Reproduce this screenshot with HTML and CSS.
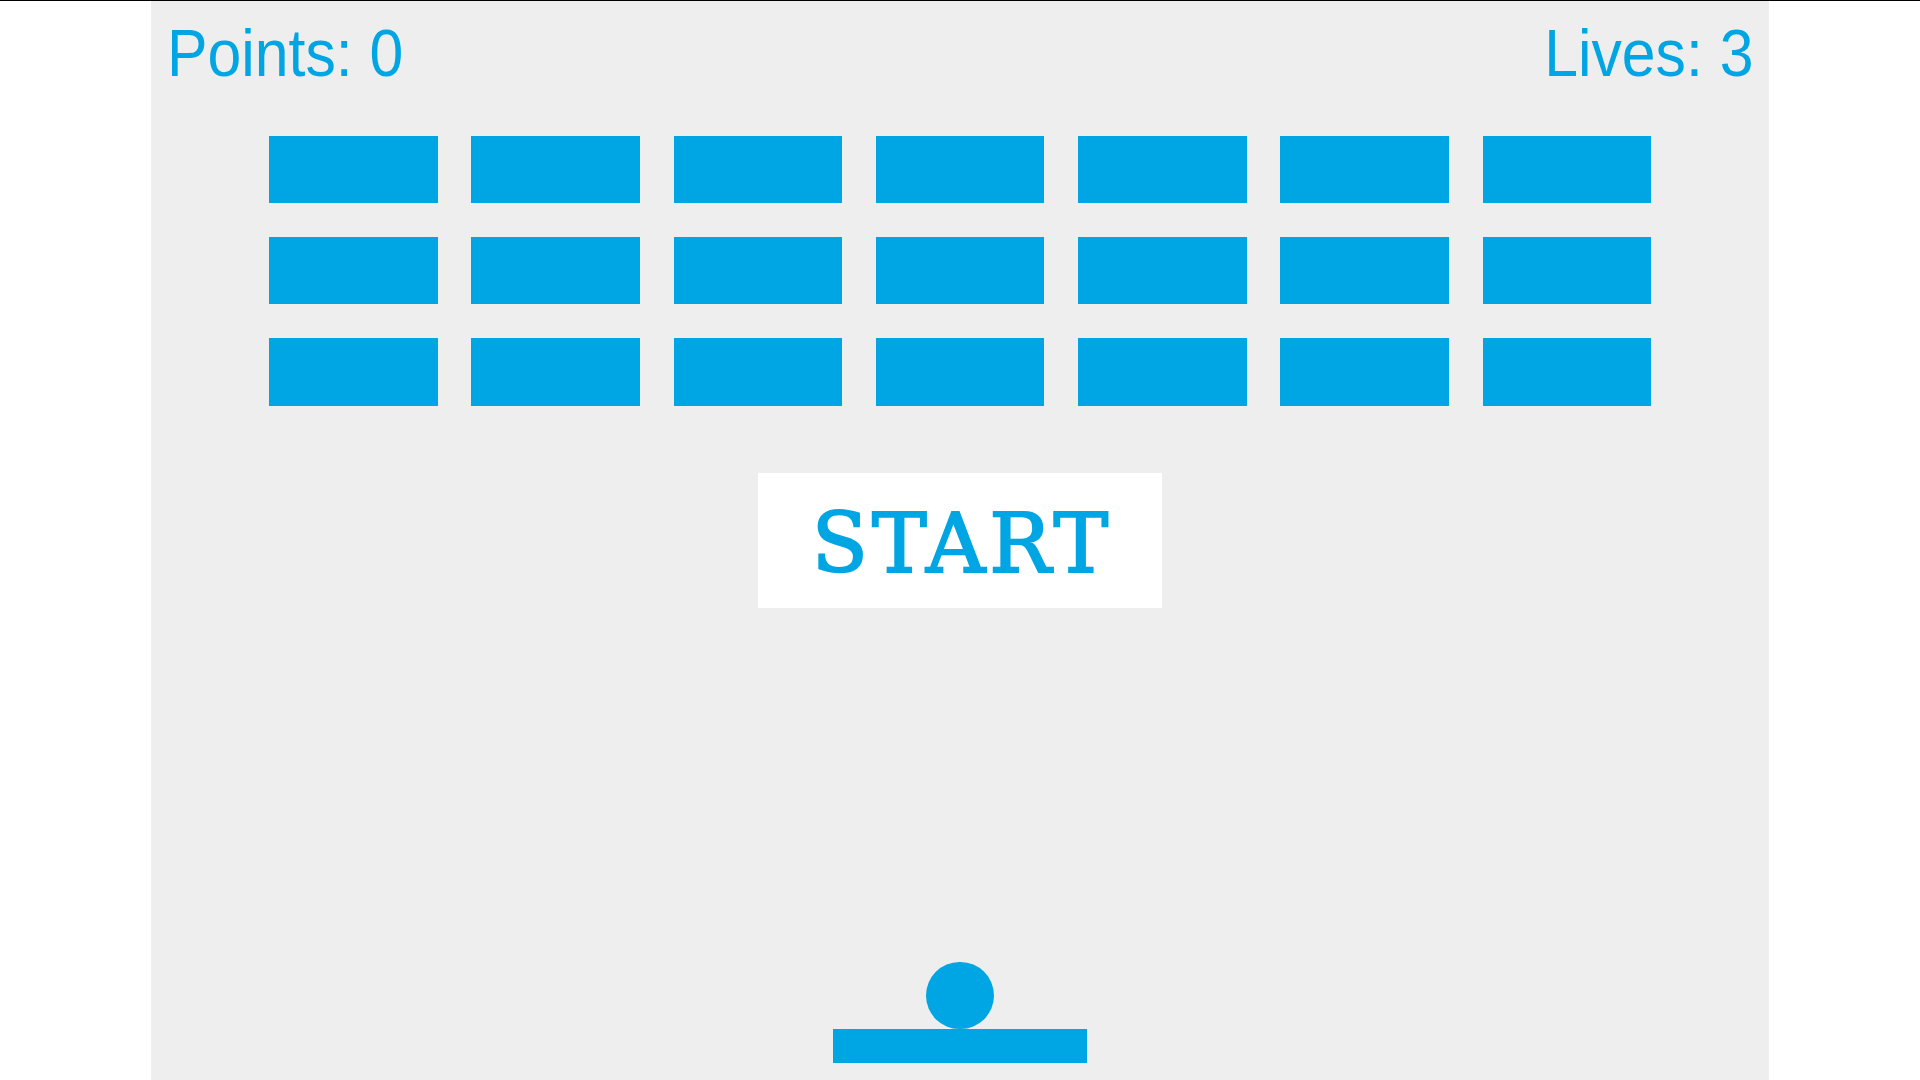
FILE: index.html
```html
<!DOCTYPE html>
<html lang="en">
<head>
  <meta charset="UTF-8" />
  <meta name="viewport" content="width=device-width, initial-scale=1" />
  <title>Breakout</title>
  <link rel="stylesheet" href="styles.css">
</head>
<body>

  <div class="game">
    <div class="hud">
      <span class="points">Points: 0</span>
      <span class="lives">Lives: 3</span>
    </div>

    <div class="bricks">
      <div class="brick"></div><div class="brick"></div><div class="brick"></div><div class="brick"></div><div class="brick"></div><div class="brick"></div><div class="brick"></div>
      <div class="brick"></div><div class="brick"></div><div class="brick"></div><div class="brick"></div><div class="brick"></div><div class="brick"></div><div class="brick"></div>
      <div class="brick"></div><div class="brick"></div><div class="brick"></div><div class="brick"></div><div class="brick"></div><div class="brick"></div><div class="brick"></div>
    </div>

    <button class="start-btn">START</button>

    <div class="spacer"></div>

    <div class="ball"></div>
    <div class="paddle"></div>
  </div>

</body>
</html>
```

FILE: styles.css
```css
body {
  margin: 0;
  background: #fff;
  border-top: 1px solid #000;
}

.game {
  width: 1618px;
  height: 1079px;
  margin: 0 auto;
  background: #eee;
  display: flex;
  flex-direction: column;
  overflow: hidden;
}

.hud {
  height: 135px;
  box-sizing: border-box;
  padding: 15px 16px 0 16px;
  display: flex;
  justify-content: space-between;
  align-items: flex-start;
  font-family: "Liberation Sans", Arial, sans-serif;
  font-size: 66px;
  line-height: 74px;
  color: #00a5e3;
}

.points {
  transform: scaleX(0.92);
  transform-origin: left top;
}

.lives {
  transform: scaleX(0.92);
  transform-origin: right top;
}

.bricks {
  margin-left: 118px;
  display: grid;
  grid-template-columns: repeat(7, 168.6px);
  grid-auto-rows: 67.4px;
  gap: 33.7px;
}

.brick {
  background: #00a5e3;
}

.start-btn {
  align-self: center;
  margin-top: 67.4px;
  width: 404.6px;
  height: 134.9px;
  padding: 6px 0 0 4px;
  border: none;
  background: #fff;
  color: #00a5e3;
  font-family: "DejaVu Serif", "Liberation Serif", serif;
  font-size: 82px;
  letter-spacing: 4px;
  -webkit-text-stroke: 2px #00a5e3;
  cursor: pointer;
}

.spacer {
  flex: 1;
}

.ball {
  align-self: center;
  width: 67.4px;
  height: 67.4px;
  border-radius: 50%;
  background: #00a5e3;
}

.paddle {
  align-self: center;
  width: 254px;
  height: 33.7px;
  margin-bottom: 17px;
  background: #00a5e3;
}
```
